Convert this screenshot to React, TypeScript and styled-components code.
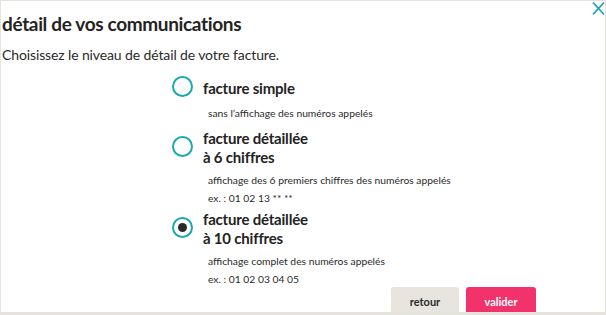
import React, { FC, useState } from 'react';
import styled, { createGlobalStyle } from 'styled-components';

const GlobalStyle = createGlobalStyle`
  html, body {
    margin: 0;
    padding: 0;
    background: #ffffff;
  }
  body {
    font-family: Lato, "Open Sans", sans-serif;
    color: #2a2a2a;
  }
`

const Modal = styled.div`
  position: relative;
  box-sizing: border-box;
  width: 606px;
  height: 315px;
  overflow: hidden;
  background: #ffffff;
  border: 1px solid #e4e3dc;
  border-bottom: 3px solid #e4e3dc;
  padding: 0 0 0 1px;
`
const Close = styled.button`
  position: absolute;
  top: 0;
  right: 0;
  width: 14px;
  height: 15px;
  padding: 0;
  border: none;
  background: none;
  cursor: pointer;
`
const Title = styled.h1`
  margin: 11px 0 0;
  font-size: 19px;
  line-height: 24px;
  font-weight: 700;
  letter-spacing: -0.35px;
  color: #232323;
`
const Intro = styled.p`
  margin: 10px 0 0;
  font-size: 14px;
  line-height: 18px;
  letter-spacing: -0.12px;
`
const Options = styled.div`
  display: flex;
  flex-direction: column;
  gap: 7px;
  margin: 12px 0 0 170px;
`
const Option = styled.label`
  display: flex;
  flex-direction: column;
  cursor: pointer;
`
const OptionHead = styled.div`
  display: flex;
  align-items: center;
  gap: 10px;
`
const Radio = styled.span<{checked: boolean}>`
  box-sizing: border-box;
  display: flex;
  align-items: center;
  justify-content: center;
  width: 21px;
  height: 21px;
  margin-bottom: 3px;
  border: 2px solid #1aa7b1;
  border-radius: 50%;
  flex-shrink: 0;

  &::after {
    content: '';
    display: ${props => props.checked ? 'block' : 'none'};
    width: 9px;
    height: 9px;
    border-radius: 50%;
    background: #2a2a2a;
  }
`
const OptionTitle = styled.span`
  font-size: 15px;
  line-height: 19px;
  font-weight: 700;
  letter-spacing: -0.2px;
  color: #232323;
`
const Details = styled.div`
  margin: 4px 0 0 36px;
`
const Detail = styled.p`
  margin: 0;
  font-size: 10.3px;
  line-height: 18px;
`
const Example = styled(Detail)`
  margin-top: 4px;
  line-height: 10px;
`
const Footer = styled.div`
  display: flex;
  justify-content: flex-end;
  gap: 7px;
  margin-top: 3px;
  padding-right: 69px;
`
const Button = styled.button<{primary?: boolean}>`
  display: block;
  width: ${props => props.primary ? '70px' : '68px'};
  height: 30px;
  padding: 0;
  border: none;
  border-radius: 3px;
  background: ${props => props.primary ? '#f2336b' : '#e7e5de'};
  color: ${props => props.primary ? '#ffffff' : '#2a2a2a'};
  font-family: Lato, sans-serif;
  font-size: 11px;
  font-weight: 700;
  line-height: 22px;
  text-align: center;
  cursor: pointer;
`

interface Choice {
    id: string
    title: string[]
    detail: string
    example?: string
}

const choices: Choice[] = [
    {id: 'simple', title: ['facture simple'], detail: 'sans l\u2019affichage des numéros appelés'},
    {id: 'six', title: ['facture détaillée', 'à 6 chiffres'], detail: 'affichage des 6 premiers chiffres des numéros appelés', example: 'ex. : 01 02 13 ** **'},
    {id: 'ten', title: ['facture détaillée', 'à 10 chiffres'], detail: 'affichage complet des numéros appelés', example: 'ex. : 01 02 03 04 05'},
]

const App: FC = () => {
    const [selected, setSelected] = useState<string>('ten')

    return (
        <>
            <GlobalStyle/>
            <Modal>
                <Close aria-label="fermer">
                    <svg width="14" height="15" viewBox="0 0 14 15" fill="none">
                        <path d="M2 1.5L13 13.5M13 1.5L2 13.5" stroke="#1aa7b1" strokeWidth="1.8"/>
                    </svg>
                </Close>
                <Title>détail de vos communications</Title>
                <Intro>Choisissez le niveau de détail de votre facture.</Intro>
                <Options>
                    {choices.map(c => (
                        <Option key={c.id} onClick={() => setSelected(c.id)}>
                            <OptionHead>
                                <Radio checked={selected === c.id}/>
                                <OptionTitle>
                                    {c.title.map((t, i) => <React.Fragment key={i}>{i > 0 && <br/>}{t}</React.Fragment>)}
                                </OptionTitle>
                            </OptionHead>
                            <Details>
                                <Detail>{c.detail}</Detail>
                                {c.example && <Example>{c.example}</Example>}
                            </Details>
                        </Option>
                    ))}
                </Options>
                <Footer>
                    <Button>retour</Button>
                    <Button primary>valider</Button>
                </Footer>
            </Modal>
        </>
    );
};

export default App;
